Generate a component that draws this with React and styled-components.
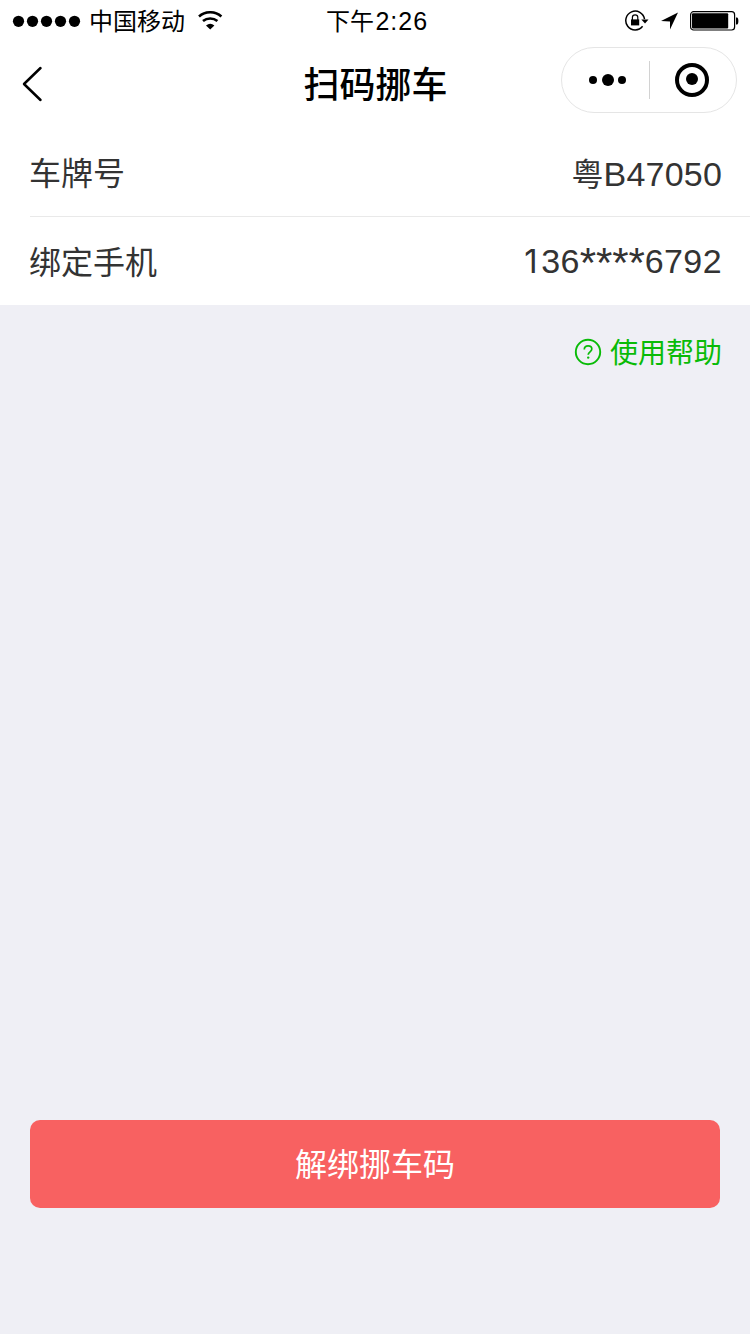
import React from 'react';
import styled, { createGlobalStyle } from 'styled-components';

const GlobalStyle = createGlobalStyle`
  * { box-sizing: border-box; }
  body { margin: 0; background: #efeff5; }
  svg { display: block; flex: none; }
`;

const Screen = styled.main`
  display: flex;
  flex-direction: column;
  width: 750px;
  height: 1334px;
  background: #efeff5;
  font-family: 'Noto Sans CJK SC', sans-serif;
  color: #333;
`;

const StatusBar = styled.header`
  display: grid;
  grid-template-columns: 1fr auto 1fr;
  align-items: center;
  height: 40px;
  padding: 0 11px 0 12px;
  background: #fff;
  color: #000;
  font-size: 24px;
  line-height: 40px;
`;

const StatusGroup = styled.div`
  display: flex;
  align-items: center;
  justify-content: ${(p) => (p.$end ? 'flex-end' : 'flex-start')};
  gap: ${(p) => (p.$end ? 12 : 0)}px;
`;

const Carrier = styled.span`
  margin: 0 13px 0 8px;
  padding-bottom: 2px;
  line-height: 38px;
`;

const Clock = styled.time`
  padding-left: 3px;
  white-space: nowrap;
`;

const Digits = styled.span`
  margin-left: ${(p) => p.$gap || 0}px;
  font-family: 'Liberation Sans', sans-serif;
  font-size: ${(p) => p.$size}px;
  letter-spacing: ${(p) => p.$spacing || 0}px;
`;

const LeadingOne = styled.span`
  margin: 0 3px 0 0;
  font-family: Inter, sans-serif;
  font-size: 33px;
  font-weight: 400;
`;

const Mask = styled.span`
  font-size: 42px;
  line-height: 0;
  letter-spacing: -0.1px;
  vertical-align: -4px;
`;

const NavBar = styled.nav`
  display: grid;
  grid-template-columns: 1fr auto 1fr;
  align-items: center;
  height: 88px;
  padding: 0 13px 0 22px;
  background: #fff;
  color: #000;
`;

const PlainButton = styled.button`
  display: flex;
  align-items: center;
  justify-content: center;
  padding: 0;
  border: 0;
  background: none;
  color: inherit;
  font: inherit;
`;

const BackButton = styled(PlainButton)`
  justify-self: start;
`;

const Title = styled.h1`
  margin: 0;
  padding: 0 8px 4px 0;
  font-size: 36px;
  font-weight: 500;
  line-height: 52px;
`;

const Capsule = styled.div`
  display: flex;
  align-items: center;
  justify-self: end;
  width: 176px;
  height: 66px;
  margin-bottom: 8px;
  border: 1px solid #e5e5e5;
  border-radius: 33px;
`;

const CapsuleButton = styled(PlainButton)`
  width: ${(p) => p.$width}px;
  height: 100%;
  padding-left: ${(p) => p.$left || 0}px;
  padding-right: ${(p) => p.$right || 0}px;
`;

const CapsuleDivider = styled.i`
  width: 1px;
  height: 38px;
  background: #d2d2d2;
`;

const List = styled.dl`
  margin: 0;
  padding-left: 30px;
  background: #fff;
  font-size: 32px;
`;

const Row = styled.div`
  display: flex;
  align-items: center;
  justify-content: space-between;
  height: ${(p) => (p.$divided ? 89 : 88)}px;
  padding-right: 28px;
  border-bottom: ${(p) => (p.$divided ? '1px solid #e9e9e9' : '0')};
`;

const Label = styled.dt`
  margin-left: -1px;
  padding-bottom: ${(p) => p.$bottom}px;
  line-height: 48px;
`;

const Value = styled.dd`
  margin: 0;
  padding-top: ${(p) => p.$top || 0}px;
  padding-bottom: ${(p) => p.$bottom || 0}px;
  line-height: 48px;
  white-space: nowrap;
`;

const HelpLink = styled.a`
  display: flex;
  align-items: center;
  align-self: flex-end;
  gap: 8px;
  height: 94px;
  padding-right: 28px;
  color: #09bb07;
  font-size: 28px;
  line-height: 40px;
`;

const HelpText = styled.span`
  padding-bottom: 2px;
`;

const UnbindButton = styled.button`
  height: 88px;
  margin: auto 30px 126px;
  padding: 0 0 4px;
  border: 0;
  border-radius: 10px;
  background: #f86161;
  color: #fff;
  font: 32px/84px 'Noto Sans CJK SC', sans-serif;
`;

const Signal = () => (
  <svg width="69" height="12" viewBox="0 0 69 12">
    {[6.5, 20.5, 34.5, 48.5, 62.5].map((x) => <circle key={x} cx={x} cy="6.3" r="5.6" />)}
  </svg>
);

const Wifi = () => (
  <svg width="26" height="20" viewBox="0 0 26 20" fill="none" stroke="#000" strokeWidth="2.6">
    <path d="M1 5.5a17 17 0 0 1 22.4 0" />
    <path d="M5 10.1a11.2 11.2 0 0 1 14.4 0" />
    <path d="M12.2 18.4l-4.2-4a6.6 6.6 0 0 1 8.4 0z" fill="#000" stroke="none" />
  </svg>
);

const RotationLock = () => (
  <svg width="24" height="22" viewBox="0 0 24 22" fill="none" stroke="#000">
    <path d="M17.6 16.3A9.4 9.4 0 1 1 19.5 9.2" strokeWidth="1.5" />
    <path d="M16.3 9.4h7.2L20 13.6z" fill="#000" stroke="none" />
    <path d="M7.4 10V7.6a2.7 2.7 0 0 1 5.4 0V10" strokeWidth="1.2" />
    <rect x="6" y="9.4" width="8.2" height="6" fill="#000" stroke="none" />
  </svg>
);

const Location = () => (
  <svg width="17" height="18" viewBox="0 0 17 18">
    <path d="M17 .6L0 8.9l9 .7v8z" />
  </svg>
);

const Battery = () => (
  <svg width="49" height="20" viewBox="0 0 49 20">
    <rect x=".6" y=".7" width="44" height="18.3" rx="3" fill="none" stroke="#000" strokeWidth="1.2" />
    <rect x="2" y="2.3" width="36.2" height="15.2" rx="1" />
    <path d="M46 6.6h1.2c1.6.4 1.6 6.6 0 7H46z" />
  </svg>
);

const BackIcon = () => (
  <svg width="21" height="36" viewBox="0 0 21 36" fill="none" stroke="#000" strokeWidth="2.5" strokeLinecap="round" strokeLinejoin="round">
    <path d="M18.5 2L2 18l16.5 16" />
  </svg>
);

const MoreIcon = () => (
  <svg width="38" height="14" viewBox="0 0 38 14">
    <circle cx="4" cy="7" r="4" />
    <circle cx="19" cy="7" r="6" />
    <circle cx="33" cy="7" r="4" />
  </svg>
);

const CloseIcon = () => (
  <svg width="34" height="34" viewBox="0 0 34 34">
    <circle cx="17" cy="17" r="15" fill="none" stroke="#000" strokeWidth="4" />
    <circle cx="17" cy="16" r="6" />
  </svg>
);

const HelpIcon = () => (
  <svg width="28" height="28" viewBox="0 0 28 28" fill="none" stroke="#09bb07" strokeWidth="1.9">
    <circle cx="14" cy="14" r="12.2" />
    <path d="M10.3 11.6c0-2.3 1.6-3.7 3.8-3.7 2.1 0 3.7 1.3 3.7 3.2 0 2.7-3.6 2.9-3.6 5.7" strokeWidth="1.7" />
    <circle cx="14.2" cy="19.6" r="1.2" fill="#09bb07" stroke="none" />
  </svg>
);

export default function App() {
  return (
    <>
      <GlobalStyle />
      <Screen>
        <StatusBar>
          <StatusGroup>
            <Signal />
            <Carrier>中国移动</Carrier>
            <Wifi />
          </StatusGroup>
          <Clock>下午<Digits $size={25} $spacing={1} $gap={1.5}>2:26</Digits></Clock>
          <StatusGroup $end>
            <RotationLock />
            <Location />
            <Battery />
          </StatusGroup>
        </StatusBar>
        <NavBar>
          <BackButton aria-label="返回"><BackIcon /></BackButton>
          <Title>扫码挪车</Title>
          <Capsule>
            <CapsuleButton $width={87} $left={5} aria-label="更多"><MoreIcon /></CapsuleButton>
            <CapsuleDivider />
            <CapsuleButton $width={86} $right={2} aria-label="关闭"><CloseIcon /></CapsuleButton>
          </Capsule>
        </NavBar>
        <List>
          <Row $divided>
            <Label $bottom={2}>车牌号</Label>
            <Value $top={2}>粤<Digits $size={34} $spacing={0.2}>B47050</Digits></Value>
          </Row>
          <Row>
            <Label $bottom={3}>绑定手机</Label>
            <Value $bottom={2}>
              <Digits $size={34} $spacing={0.4}>
                <LeadingOne>1</LeadingOne>36<Mask>****</Mask>6792
              </Digits>
            </Value>
          </Row>
        </List>
        <HelpLink><HelpIcon /><HelpText>使用帮助</HelpText></HelpLink>
        <UnbindButton>解绑挪车码</UnbindButton>
      </Screen>
    </>
  );
}
